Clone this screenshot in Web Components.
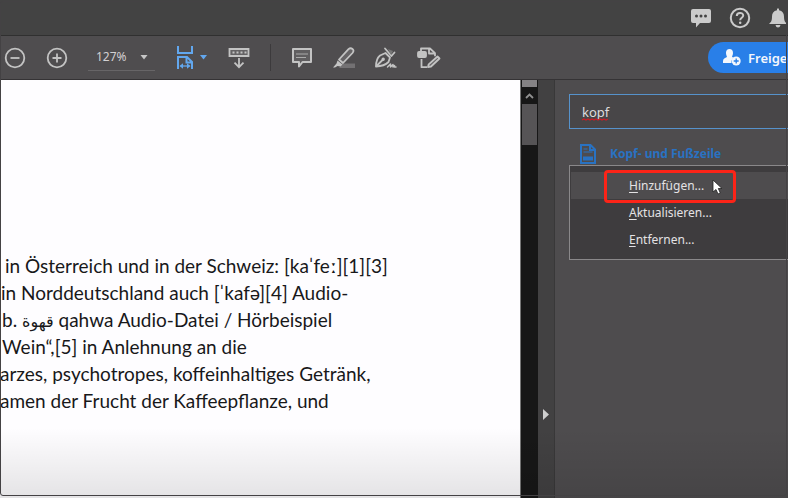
<!DOCTYPE html>
<html lang="de">
<head>
<meta charset="utf-8">
<title>PDF-Editor</title>
<style>
html, body { margin: 0; height: 100%; overflow: hidden; background: #4d4b4d; }
body { font-family: "Noto Sans", "Open Sans", sans-serif; }
bdi { font-size: 16px; line-height: 1; }
</style>
</head>
<body>
<pdf-app>
  <title-bar slot="title"></title-bar>
  <tool-bar slot="tools"></tool-bar>
  <document-page slot="page">
    <p>in Österreich und in der Schweiz: [kaˈfeː][1][3]</p>
    <p class="near">in Norddeutschland auch [ˈkafə][4] Audio-</p>
    <p>b. <bdi>قهوة</bdi> qahwa Audio-Datei / Hörbeispiel</p>
    <p>Wein“,[5] in Anlehnung an die</p>
    <p class="cut">arzes, psychotropes, koffeinhaltiges Getränk,</p>
    <p class="cut">amen der Frucht der Kaffeepflanze, und</p>
  </document-page>
  <scroll-rail slot="page"></scroll-rail>
  <panel-toggle slot="page"></panel-toggle>
  <tools-panel slot="page">
    <tool-result>Kopf- und Fußzeile</tool-result>
    <tool-menu>
      <menu-entry active><u>H</u>inzufügen...</menu-entry>
      <menu-entry><u>A</u>ktualisieren...</menu-entry>
      <menu-entry><u>E</u>ntfernen...</menu-entry>
    </tool-menu>
  </tools-panel>
</pdf-app>
<script>
const define = (name, html) => customElements.define(name, class extends HTMLElement {
  constructor() {
    super();
    const t = document.createElement('template');
    t.innerHTML = html;
    this.attachShadow({ mode: 'open' }).append(t.content.cloneNode(true));
  }
});

define('pdf-app', `
<style>
:host { display: grid; grid-template-rows: auto auto minmax(0, 1fr); height: 100vh; position: relative; overflow: hidden; }
.body { display: grid; grid-template-columns: minmax(0, 521fr) 17px 17px minmax(0, 233fr); min-height: 0; }
.frame { position: absolute; inset: 1px 1px 2px 0; border: 1px solid #444244; border-radius: 3px; pointer-events: none; }
.fade { position: absolute; inset: auto 0 0 0; height: 70px; background: linear-gradient(transparent, #0000001a); pointer-events: none; }
</style>
<slot name="title"></slot>
<slot name="tools"></slot>
<div class="body"><slot name="page"></slot></div>
<div class="fade"></div><div class="frame"></div>`);

const button = 'button { border: 0; padding: 0; margin: 0; background: none; color: inherit; font: inherit; display: block; flex: none; } svg { display: block; }';

define('title-bar', `
<style>
:host { display: flex; justify-content: flex-end; align-items: center; gap: 18px; height: 35px; padding-right: 1px; color: #cbcbcb; background: #434343; border-bottom: 1px solid #303030; overflow: hidden; }
${button}
</style>
<button aria-label="Kommentare"><svg width="20" height="20" viewBox="0 0 20 20"><path fill="currentColor" d="M2 1h16q2 0 2 2v10q0 2-2 2H9l-4 4.500V15H2q-2 0-2-2V3q0-2 2-2Z"/><g fill="#434343"><circle cx="5.500" cy="8" r="1.500"/><circle cx="10" cy="8" r="1.500"/><circle cx="14.500" cy="8" r="1.500"/></g></svg></button>
<button aria-label="Hilfe"><svg width="22" height="22" viewBox="0 0 22 22" fill="none" stroke="currentColor" stroke-width="2"><circle cx="11" cy="11" r="9.200"/><path d="M7.800 9c0-4 6.400-4 6.400-.5 0 2.300-3 2.200-3 4.700"/><circle cx="11.200" cy="15.800" r=".6" stroke-width="1.300" fill="currentColor"/></svg></button>
<button aria-label="Benachrichtigungen"><svg width="18" height="20" viewBox="0 0 18 20"><path fill="currentColor" d="M8 1q1-1.500 2 0v1.200c3.500.8 5 3 5 6.300 0 4.500 1 5.500 3 7.500H0c2-2 3-3 3-7.500 0-3.300 1.500-5.500 5-6.300ZM6.500 17h5q-.5 2.500-2.500 2.500T6.500 17Z"/></svg></button>`);

define('tool-bar', `
<style>
:host { display: flex; align-items: center; height: 43px; padding-left: 4px; background: #4f4d4f; border-bottom: 1px solid #353335; color: #c3c3c3; overflow: hidden; }
${button}
.group { display: flex; align-items: center; gap: 20px; }
.zoom { box-sizing: border-box; display: grid; grid-template-columns: 1fr 8px; align-items: center; width: 67px; height: 27px; padding: 0 7px 0 8px; margin: 0 21px 0 20px; border-bottom: 1px solid #676567; }
select { appearance: none; border: 0; padding: 0; margin: 0; background: none; color: #d2d0d2; font: 12px/18px "Noto Sans", sans-serif; outline: 0; width: 100%; }
.fit { display: flex; align-items: center; gap: 6px; color: #62a7ee; }
.sep { width: 1px; height: 27px; background: #3c3a3c; margin: 0 20px; }
.keys { margin-left: 21px; }
.share { margin-left: auto; display: flex; align-items: center; gap: 7px; box-sizing: border-box; width: 80px; height: 31px; padding-left: 15px; border-radius: 16px 0 0 16px; background: #297fe8; color: #f4f7fc; font: 600 13px/20px "Noto Sans", sans-serif; white-space: nowrap; }
.share svg { flex: none; }
</style>
<div class="group">
<button aria-label="Verkleinern"><svg width="22" height="22" viewBox="0 0 22 22" fill="none" stroke="currentColor" stroke-width="1.800"><circle cx="11" cy="11" r="9.300"/><path d="M6.500 11h9"/></svg></button>
<button aria-label="Vergrößern"><svg width="22" height="22" viewBox="0 0 22 22" fill="none" stroke="currentColor" stroke-width="1.800"><circle cx="11" cy="11" r="9.300"/><path d="M6.500 11h9M11 6.500v9"/></svg></button>
</div>
<div class="zoom"><select aria-label="Zoom"><option>127%</option></select><svg width="8" height="5" viewBox="0 0 8 5"><path fill="#c6c6c6" d="M.5 0h7L4 4.500Z"/></svg></div>
<button class="fit" aria-label="Seitenbreite"><svg width="18" height="25" viewBox="0 0 18 25" fill="none" stroke="currentColor" stroke-width="2"><path d="M2 1v7h14V1M2 24V12h9l5 5v7M10.500 12v5.500H16"/><path d="M4.500 21h9" stroke-width="1.300"/><path fill="currentColor" stroke="none" d="M3.500 21l3.500-2.800v5.600ZM14.500 21 11 18.200v5.600Z"/></svg><svg width="7" height="5" viewBox="0 0 7 5"><path fill="currentColor" d="M0 0h7L3.500 4.500Z"/></svg></button>
<button class="keys" aria-label="Bildlauf"><svg width="22" height="22" viewBox="0 0 22 22" fill="none" stroke="currentColor" stroke-width="1.800"><path d="M1.500 2h19v7h-19Z" fill="#656365"/><path d="M4.500 5.500h14" stroke-dasharray="2 2"/><path d="M11 11v9M6.500 15.700 11 20.200l4.500-4.500"/></svg></button>
<div class="sep"></div>
<div class="group">
<button aria-label="Kommentar"><svg width="22" height="22" viewBox="0 0 22 22"><path d="M2 2h18v13h-8.500L8 19.500V15H2Z" fill="#605e60" stroke="currentColor" stroke-width="2" stroke-linejoin="round"/><path d="M5 7h12M5 10.500h10" stroke="#aaa" stroke-width="1.200"/></svg></button>
<button aria-label="Hervorheben"><svg width="22" height="22" viewBox="0 0 22 22"><path d="M9 16.500h13V21H6Z" fill="#737173"/><path d="M6 12.500 15.500 2.200q2-1.800 4-.2t0 4L10 16Z" fill="#656365" stroke="currentColor" stroke-width="1.800" stroke-linejoin="round"/><path d="m4.500 13.500 5 4-2 2-3-.6L2 20.500H0l3.500-4Z" fill="currentColor"/></svg></button>
<button aria-label="Unterschreiben"><svg width="22" height="22" viewBox="0 0 22 22" fill="none" stroke="currentColor" stroke-width="1.800" stroke-linejoin="round" stroke-linecap="round"><path d="M1 19.500c0-5 1-8.500 4-11L10.500 6l4.500 4.500-1.500 4.500c-3 3-7 4.300-12.500 4.500Z"/><path d="m1.500 19 6-6"/><circle cx="8.200" cy="12.300" r=".8" fill="currentColor"/><path d="M10 1.500 16.500 9l3-3.500"/><path fill="#777" stroke="none" d="m13 2 5 2-2 4Z"/><path d="m12.500 20 3-3v3l2.500-2.500V20l1.500-1.500V20H21" stroke-width="1.500"/></svg></button>
<button aria-label="Mehr Werkzeuge"><svg width="24" height="22" viewBox="0 0 24 22" fill="none" stroke="currentColor" stroke-width="1.800" stroke-linejoin="round"><path d="M4 5V1.500h9l5 4.700v3M12 1.500v5h6M4.500 12v8.200H10"/><rect x="1" y="5" width="8" height="5" rx="1" fill="currentColor"/><path d="m20.500 9.500 2 2-8.500 8-3 .5.700-2.700Z" fill="#656365"/></svg></button>
</div>
<button class="share"><svg width="18" height="17" viewBox="0 0 18 17"><path fill="currentColor" d="M6.500 0c2.200 0 3.500 1.500 3.500 4 0 2-.8 2.800-1 4l2 .8A5 5 0 0 0 8.500 14H0v-2c0-2.500 2-3 4-4-.2-1.200-1-2-1-4 0-2.500 1.300-4 3.500-4Z"/><circle cx="13.200" cy="12" r="4.500" fill="currentColor"/><path d="M10.700 12h5M13.200 9.500v5" stroke="#297fe8" stroke-width="1.300"/></svg><span>Freige</span></button>`);

define('document-page', `
<style>
:host { display: block; min-width: 0; box-sizing: border-box; padding-top: 172px; background: #fefdff; color: #18181a; font: 19px/27px Lato, "Noto Sans", "DejaVu Sans", sans-serif; overflow: hidden; border-right: 1px solid #777; }
::slotted(p) { margin: 0 0 0 5px; white-space: nowrap; }
::slotted(p:nth-child(n+2)) { margin-left: 2px; }
::slotted(p.near) { margin-left: 1px; }
::slotted(p.cut) { margin-left: 0; }
</style><slot></slot>`);

define('scroll-rail', `
<style>
:host { display: flex; flex-direction: column; background: #171717; padding: 0 1px; }
i { height: 7px; background: #858385; }
button { height: 17px; border: 0; padding: 0; background: #171717; display: grid; place-items: center; }
.thumb { height: 41px; background: #565456; }
</style>
<i></i><button aria-label="Nach oben"><svg width="9" height="6" viewBox="0 0 9 6" fill="none" stroke="#909090" stroke-width="1.800"><path d="m1 5 3.500-3.500L8 5"/></svg></button><div class="thumb"></div>`);

define('panel-toggle', `
<style>
:host { display: flex; flex-direction: column; justify-content: flex-end; background: #424142; border-right: 1px solid #393839; }
button { border: 0; background: none; padding: 0 0 0 5px; margin-bottom: 78px; }
svg { display: block; }
</style>
<button aria-label="Bereich ausblenden"><svg width="6" height="11" viewBox="0 0 6 11"><path fill="#cecece" d="M0 0 6 5.500 0 11Z"/></svg></button>`);

define('tools-panel', `
<style>
:host { display: block; min-width: 0; box-sizing: border-box; padding: 14px 0 0 14px; background: #4e4c4e; overflow: hidden; }
.search { position: relative; }
input { display: block; box-sizing: border-box; width: 100%; height: 35px; border: 1px solid #5692cb; border-right: 0; padding: 0 12px; margin: 0; background: #484648; color: #dedcde; font: 13px/20px "Noto Sans", sans-serif; outline: 0; }
.squiggle { position: absolute; left: 13px; top: 24px; pointer-events: none; }
</style>
<div class="search">
<input type="text" aria-label="Werkzeuge suchen" value="kopf" spellcheck="false">
<svg class="squiggle" width="26" height="3" viewBox="0 0 26 3"><path d="M0 2 2 1l2 1 2-1 2 1 2-1 2 1 2-1 2 1 2-1 2 1 2-1 2 1 2-1" fill="none" stroke="#c81e26" stroke-width="1.200"/></svg>
</div>
<slot></slot>`);

define('tool-result', `
<style>
:host { display: block; padding: 14px 0 0 10px; }
${button}
button { display: flex; align-items: center; gap: 13px; color: #2972c2; font: 700 12px/22px "Noto Sans", sans-serif; }
</style>
<button><svg width="18" height="22" viewBox="0 0 18 22" fill="none" stroke="currentColor" stroke-width="2"><path d="M2 2h9.500L16 6.500V20H2Z"/><path d="M11 2v5h5"/><path d="M4.500 6h4M4.500 9h9" stroke-width="1.200"/><path d="M4 15.500h10" stroke-width="4"/></svg><slot></slot></button>`);

define('tool-menu', `
<style>
:host { display: block; position: relative; box-sizing: border-box; padding: 6px 0 6px 1px; background: #3e3c3e; border: 1px solid #8a888a; border-right: 0; }
.mark { position: absolute; left: 34px; top: 4px; box-sizing: border-box; width: 132px; height: 33px; border: 3px solid #fc2418; border-radius: 4px; pointer-events: none; }
.pointer { position: absolute; left: 142px; top: 13px; pointer-events: none; }
</style>
<div role="menu"><slot></slot></div><div class="mark"></div>
<svg class="pointer" width="11" height="16" viewBox="0 0 11 16"><path d="M1 1v12l3-2.500 2 4.500 2.300-1-2-4.500H10Z" fill="#fff" stroke="#222" stroke-width=".8"/></svg>`);

define('menu-entry', `
<style>
:host { display: block; }
:host([active]) { background: #4e4c4e; }
${button}
button { width: 100%; height: 27px; padding-left: 58px; text-align: left; color: #e4e2e4; font: 12px/27px "Noto Sans", sans-serif; white-space: nowrap; }
::slotted(u) { text-underline-offset: 2px; }
</style>
<button role="menuitem"><slot></slot></button>`);
</script>
</body>
</html>
